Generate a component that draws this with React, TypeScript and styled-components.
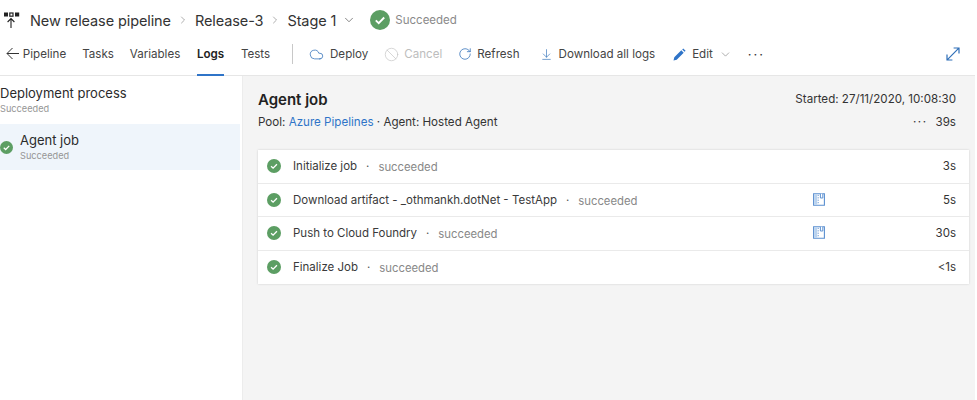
import styled, { createGlobalStyle } from 'styled-components'
import { ChevronDown, ChevronRight, Cloud, Ban, RotateCw, ArrowDownToLine } from 'lucide-react'

const steps = [
  { id: 1, name: 'Initialize job', time: '3s' },
  { id: 2, name: 'Download artifact - _othmankh.dotNet - TestApp', time: '5s', zip: true },
  { id: 3, name: 'Push to Cloud Foundry', time: '30s', zip: true },
  { id: 4, name: 'Finalize Job', time: '<1s' }
]

const tabs = [
  { label: 'Pipeline', width: 43 },
  { label: 'Tasks', width: 30 },
  { label: 'Variables', width: 50 },
  { label: 'Logs', width: 27, active: true },
  { label: 'Tests', width: 29 }
]

const CheckIcon = ({ size }: { size: number }) => (
  <svg width={size} height={size} viewBox="0 0 20 20">
    <circle cx="10" cy="10" r="10" fill="#5c9e63" />
    <path d="M5.8 10.4l2.9 2.7 5.5-5.6" fill="none" stroke="#fff" strokeWidth="1.9" />
  </svg>
)

const PipelineIcon = () => (
  <svg width="17" height="19" viewBox="0 0 17 19">
    <rect x="1" y="1.5" width="4" height="4" fill="#222" />
    <rect x="6.8" y="2" width="3.2" height="3.2" fill="#fff" stroke="#222" strokeWidth="1.2" />
    <rect x="12" y="1.5" width="4.2" height="4" fill="#222" />
    <path d="M8 17V7.5M4.6 11L8 7.5l3.4 3.5" fill="none" stroke="#222" strokeWidth="1.1" />
  </svg>
)

const BackArrow = () => (
  <svg width="13" height="13" viewBox="0 0 13 13">
    <path d="M13 6.5H1M6.5 1L1 6.5 6.5 12" fill="none" stroke="#333" strokeWidth="1" />
  </svg>
)

const PencilIcon = () => (
  <svg width="13" height="13" viewBox="0 0 13 13">
    <path d="M0.5 12.5l0.8-3.2 7-7 2.4 2.4-7 7zM9.2 1.4l1-1 2.4 2.4-1 1z" fill="#2f74c8" />
  </svg>
)

const ExpandIcon = () => (
  <svg width="14" height="14" viewBox="0 0 14 14">
    <path d="M1.2 12.8L12.8 1.2M7.6 1h5.4v5.4M1 7.6V13h5.4" fill="none" stroke="#2f6fb8" strokeWidth="1.2" />
  </svg>
)

const ZipIcon = () => (
  <svg width="12" height="13" viewBox="0 0 12 14" preserveAspectRatio="none">
    <path d="M0.6 0.8h10.8v12.4H0.6z" fill="#fff" stroke="#5a8fd0" strokeWidth="1.1" />
    <path d="M1.2 1.4h3v11.2h-3z" fill="#b9d2ee" />
    <path d="M7.4 0.8v4.6h2.4V0.8" fill="#fff" stroke="#5a8fd0" strokeWidth="1" />
    <path d="M5.2 2v1.2M5.2 4.6v1.2M5.2 7.2v1.2M5.2 9.8v1.2" stroke="#5a8fd0" strokeWidth="1" />
  </svg>
)

export default function App() {
  return (
    <Page>
      <GlobalStyle />
      <TitleRow>
        <PipelineIcon />
        <FirstCrumb>New release pipeline</FirstCrumb>
        <ChevronRight size={12} strokeWidth={1.2} color="#777" />
        <Crumb>Release-3</Crumb>
        <ChevronRight size={12} strokeWidth={1.2} color="#777" />
        <Crumb>Stage 1</Crumb>
        <ChevronDown size={14} strokeWidth={1.2} color="#555" />
        <TitleStatus>
          <CheckIcon size={20} />
          <span>Succeeded</span>
        </TitleStatus>
      </TitleRow>

      <Toolbar>
        <BackIcon>
          <BackArrow />
        </BackIcon>
        <Tabs>
          {tabs.map(tab => (
            <Tab key={tab.label} $active={tab.active} $width={tab.width}>
              {tab.label}
            </Tab>
          ))}
        </Tabs>
        <Divider />
        <Action $margin={16} $gap={6}>
          <Cloud size={15} strokeWidth={1.2} color="#2f6fb8" />
          Deploy
        </Action>
        <Action $margin={16} $gap={5} $disabled>
          <Ban size={15} strokeWidth={1.1} color="#c4c4c4" />
          Cancel
        </Action>
        <Action $margin={20} $gap={5}>
          <RotateCw size={14} strokeWidth={1.3} color="#2f6fb8" />
          Refresh
        </Action>
        <Action $margin={18} $gap={6}>
          <ArrowDownToLine size={13} strokeWidth={1.2} color="#2f6fb8" />
          Download all logs
        </Action>
        <Action $margin={16} $gap={6}>
          <PencilIcon />
          Edit
          <ChevronDown size={13} strokeWidth={1.1} color="#777" />
        </Action>
        <Dots>···</Dots>
        <Expand>
          <ExpandIcon />
        </Expand>
      </Toolbar>

      <Body>
        <Sidebar>
          <ProcessHead>
            <SideTitle>Deployment process</SideTitle>
            <SideSub>Succeeded</SideSub>
          </ProcessHead>
          <JobRow>
            <CheckIcon size={13} />
            <div>
              <SideTitle>Agent job</SideTitle>
              <SideSub>Succeeded</SideSub>
            </div>
          </JobRow>
        </Sidebar>

        <Main>
          <JobHead>
            <JobTitle>Agent job</JobTitle>
            <Meta>Started: 27/11/2020, 10:08:30</Meta>
          </JobHead>
          <JobInfo>
            <Meta>
              Pool: <PoolLink>Azure Pipelines</PoolLink> · Agent: Hosted Agent
            </Meta>
            <Meta>
              <MetaDots>···</MetaDots>39s
            </Meta>
          </JobInfo>
          <Card>
            {steps.map(step => (
              <StepRow key={step.id}>
                <CheckIcon size={14} />
                <StepLabel>
                  <StepName>{step.name}</StepName>
                  <StepSep>·</StepSep>
                  <StepStatus>succeeded</StepStatus>
                </StepLabel>
                <ZipCell>{step.zip && <ZipIcon />}</ZipCell>
                <StepTime>{step.time}</StepTime>
              </StepRow>
            ))}
          </Card>
        </Main>
      </Body>
    </Page>
  )
}

const GlobalStyle = createGlobalStyle`
  html, body {
    margin: 0;
    padding: 0;
    background: #fff;
  }
  * {
    box-sizing: border-box;
  }
`

const Page = styled.div`
  width: 975px;
  height: 400px;
  overflow: hidden;
  display: flex;
  flex-direction: column;
  font-family: Inter, 'Liberation Sans', sans-serif;
  color: #2b2b2b;
  -webkit-font-smoothing: antialiased;
`

const TitleRow = styled.div`
  height: 40px;
  display: flex;
  align-items: center;
  padding-left: 3px;
  gap: 6px;
`

const Crumb = styled.span`
  font-size: 14.5px;
  letter-spacing: -0.1px;
  color: #333;
`

const FirstCrumb = styled(Crumb)`
  margin-left: 4px;
`

const TitleStatus = styled.div`
  display: flex;
  align-items: center;
  gap: 5px;
  margin-left: 8px;
  font-size: 11.5px;
  color: #8a8a8a;
`

const Toolbar = styled.div`
  height: 36px;
  display: flex;
  align-items: flex-start;
  font-size: 11.6px;
  line-height: 28px;
  color: #444;
  border-bottom: 1px solid #e6e6e6;
  padding-left: 6px;
`

const BackIcon = styled.div`
  width: 17px;
  height: 26px;
  display: flex;
  align-items: center;
`

const Tabs = styled.div`
  display: flex;
  align-self: stretch;
  gap: 17px;
`

const Tab = styled.div<{ $active?: boolean; $width: number }>`
  width: ${props => props.$width}px;
  display: flex;
  justify-content: center;
  white-space: nowrap;
  font-weight: ${props => (props.$active ? 600 : 400)};
  color: ${props => (props.$active ? '#222' : '#444')};
  border-bottom: 2px solid ${props => (props.$active ? '#2f74c8' : 'transparent')};
  margin-bottom: -1px;
`

const Divider = styled.div`
  width: 1px;
  height: 20px;
  background: #c8c8c8;
  margin: 4px 16px 0 22px;
`

const Action = styled.div<{ $margin: number; $gap: number; $disabled?: boolean }>`
  display: flex;
  align-items: center;
  gap: ${props => props.$gap}px;
  white-space: nowrap;
  margin-right: ${props => props.$margin}px;
  color: ${props => (props.$disabled ? '#bdbdbd' : '#444')};
`

const Dots = styled.div`
  font-size: 13px;
  line-height: 29px;
  letter-spacing: 2px;
  color: #333;
`

const Expand = styled.div`
  display: flex;
  margin-left: auto;
  margin-right: 15px;
  margin-top: 7px;
`

const Body = styled.div`
  flex: 1;
  display: flex;
`

const Sidebar = styled.div`
  width: 243px;
  border-right: 1px solid #ececec;
  background: #fff;
`

const ProcessHead = styled.div`
  padding-top: 9px;
  height: 48px;
`

const SideTitle = styled.div`
  font-size: 13px;
  line-height: 17px;
  color: #2b2b2b;
`

const SideSub = styled.div`
  font-size: 9.2px;
  line-height: 13px;
  color: #969696;
`

const JobRow = styled.div`
  width: 240px;
  height: 46px;
  display: flex;
  align-items: center;
  gap: 7px;
  background: #eff5fb;
`

const Main = styled.div`
  flex: 1;
  background: #f4f4f4;
  padding: 13px 6px 0 15px;
`

const JobHead = styled.div`
  display: flex;
  justify-content: space-between;
  align-items: center;
  padding-right: 13px;
  height: 20px;
`

const JobTitle = styled.div`
  font-size: 15px;
  font-weight: 600;
  color: #222;
`

const JobInfo = styled.div`
  display: flex;
  justify-content: space-between;
  align-items: center;
  height: 20px;
  margin-top: 3px;
  padding-right: 13px;
`

const Meta = styled.div`
  font-size: 11.6px;
  color: #333;
`

const PoolLink = styled.span`
  color: #2f74c8;
`

const MetaDots = styled.span`
  letter-spacing: 1.5px;
  margin-right: 8px;
`

const Card = styled.div`
  margin-top: 18px;
  background: #fff;
  box-shadow: 0 0 2px rgba(0, 0, 0, 0.16);
`

const StepRow = styled.div`
  height: 33.5px;
  display: grid;
  grid-template-columns: 14px 1fr 12px 131px;
  align-items: center;
  padding: 0 13px 0 9px;
  font-size: 11.5px;
  border-bottom: 1px solid #eaeaea;

  &:last-child {
    height: 33px;
    border-bottom: none;
  }
`

const StepLabel = styled.div`
  display: flex;
  align-items: center;
  padding-left: 12px;
  white-space: nowrap;
`

const StepName = styled.span`
  color: #3a3a3a;
`

const StepSep = styled.span`
  margin: 0 9px;
  color: #555;
`

const StepStatus = styled.span`
  font-size: 11.3px;
  padding-top: 2px;
  color: #888;
`

const ZipCell = styled.div`
  display: flex;
  padding-bottom: 1px;
`

const StepTime = styled.span`
  text-align: right;
  color: #333;
`
